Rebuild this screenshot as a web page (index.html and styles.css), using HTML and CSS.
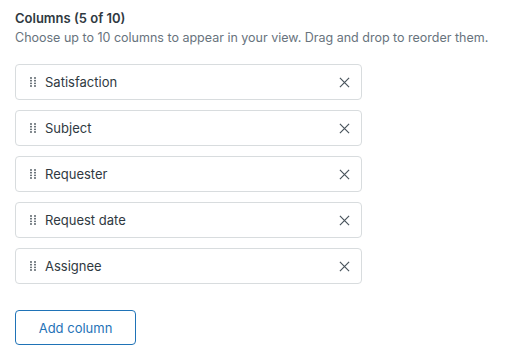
FILE: index.html
```html
<!DOCTYPE html>
<html lang="en">
<head>
    <meta charset="UTF-8">
    <title>Columns</title>
    <link rel="stylesheet" href="styles.css">
</head>
<body>
    <div class="panel">
        <h2 class="panel-title">Columns (5 of 10)</h2>
        <p class="panel-hint">Choose up to 10 columns to appear in your view. Drag and drop to reorder them.</p>

        <ul class="column-list">
            <li class="column-item">
                <svg class="grip" viewBox="0 0 6 10"><circle cx="1" cy="1" r="0.9"/><circle cx="5" cy="1" r="0.9"/><circle cx="1" cy="3.7" r="0.9"/><circle cx="5" cy="3.7" r="0.9"/><circle cx="1" cy="6.3" r="0.9"/><circle cx="5" cy="6.3" r="0.9"/><circle cx="1" cy="9" r="0.9"/><circle cx="5" cy="9" r="0.9"/></svg>
                <span class="column-name">Satisfaction</span>
                <svg class="remove" viewBox="0 0 12 12"><path d="M1 1l10 10M11 1L1 11"/></svg>
            </li>
            <li class="column-item">
                <svg class="grip" viewBox="0 0 6 10"><circle cx="1" cy="1" r="0.9"/><circle cx="5" cy="1" r="0.9"/><circle cx="1" cy="3.7" r="0.9"/><circle cx="5" cy="3.7" r="0.9"/><circle cx="1" cy="6.3" r="0.9"/><circle cx="5" cy="6.3" r="0.9"/><circle cx="1" cy="9" r="0.9"/><circle cx="5" cy="9" r="0.9"/></svg>
                <span class="column-name">Subject</span>
                <svg class="remove" viewBox="0 0 12 12"><path d="M1 1l10 10M11 1L1 11"/></svg>
            </li>
            <li class="column-item">
                <svg class="grip" viewBox="0 0 6 10"><circle cx="1" cy="1" r="0.9"/><circle cx="5" cy="1" r="0.9"/><circle cx="1" cy="3.7" r="0.9"/><circle cx="5" cy="3.7" r="0.9"/><circle cx="1" cy="6.3" r="0.9"/><circle cx="5" cy="6.3" r="0.9"/><circle cx="1" cy="9" r="0.9"/><circle cx="5" cy="9" r="0.9"/></svg>
                <span class="column-name">Requester</span>
                <svg class="remove" viewBox="0 0 12 12"><path d="M1 1l10 10M11 1L1 11"/></svg>
            </li>
            <li class="column-item">
                <svg class="grip" viewBox="0 0 6 10"><circle cx="1" cy="1" r="0.9"/><circle cx="5" cy="1" r="0.9"/><circle cx="1" cy="3.7" r="0.9"/><circle cx="5" cy="3.7" r="0.9"/><circle cx="1" cy="6.3" r="0.9"/><circle cx="5" cy="6.3" r="0.9"/><circle cx="1" cy="9" r="0.9"/><circle cx="5" cy="9" r="0.9"/></svg>
                <span class="column-name">Request date</span>
                <svg class="remove" viewBox="0 0 12 12"><path d="M1 1l10 10M11 1L1 11"/></svg>
            </li>
            <li class="column-item">
                <svg class="grip" viewBox="0 0 6 10"><circle cx="1" cy="1" r="0.9"/><circle cx="5" cy="1" r="0.9"/><circle cx="1" cy="3.7" r="0.9"/><circle cx="5" cy="3.7" r="0.9"/><circle cx="1" cy="6.3" r="0.9"/><circle cx="5" cy="6.3" r="0.9"/><circle cx="1" cy="9" r="0.9"/><circle cx="5" cy="9" r="0.9"/></svg>
                <span class="column-name">Assignee</span>
                <svg class="remove" viewBox="0 0 12 12"><path d="M1 1l10 10M11 1L1 11"/></svg>
            </li>
        </ul>

        <button type="button" class="add-button">Add column</button>
    </div>
</body>
</html>
```

FILE: styles.css
```css
body, html {
    margin: 0;
    padding: 0;
    background-color: #ffffff;
    font-family: Inter, "Noto Sans", Arial, sans-serif;
    color: #2f3941;
}

.panel {
    padding: 8px 15px;
}

.panel-title {
    margin: 0;
    font-size: 13px;
    line-height: 20px;
    font-weight: 600;
    color: #2f3941;
}

.panel-hint {
    margin: 0;
    font-size: 12.5px;
    line-height: 20px;
    color: #68737d;
    white-space: nowrap;
}

.column-list {
    list-style: none;
    margin: 16px 0 0;
    padding: 0;
    width: 347px;
    display: flex;
    flex-direction: column;
    gap: 10px;
}

.column-item {
    display: flex;
    align-items: center;
    height: 36px;
    padding: 0 11px 0 14px;
    border: 1px solid #d8dcde;
    border-radius: 4px;
    box-sizing: border-box;
}

.grip {
    width: 6px;
    height: 10px;
    fill: #49545c;
    flex-shrink: 0;
}

.column-name {
    flex: 1;
    margin-left: 9px;
    font-size: 13px;
    color: #2f3941;
}

.remove {
    width: 11px;
    height: 11px;
    stroke: #49545c;
    stroke-width: 1.3;
    fill: none;
}

.add-button {
    margin-top: 26px;
    width: 121px;
    height: 35px;
    border: 1px solid #1f73b7;
    border-radius: 4px;
    background: #ffffff;
    color: #1f73b7;
    font-family: inherit;
    font-size: 13px;
    cursor: pointer;
}
```
